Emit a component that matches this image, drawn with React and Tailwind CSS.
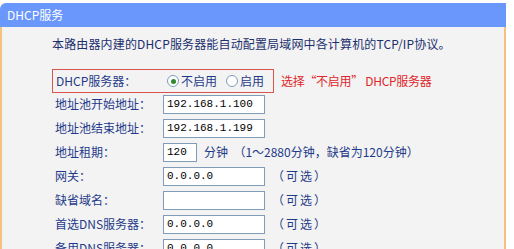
export default function App() {
  const cjk = { fontFamily: '"Noto Sans CJK SC", "Noto Sans", sans-serif' };
  const mono = { fontFamily: '"Liberation Mono", "Noto Sans CJK SC", monospace' };
  const Input = ({ value, w = "w-[102px]" }) => (
    <div className={`${w} h-[19px] border border-[#7f9db9] bg-white flex items-center px-[3px] text-[11px] text-black leading-none`} style={mono}>
      {value}
    </div>
  );
  const Row = ({ label, children }) => (
    <div className="flex items-center h-[24px]">
      <div className="w-[111px] pl-[3px] text-[12px] text-[#1f3a8a]">{label}</div>
      {children}
    </div>
  );
  const Opt = () => <span className="ml-[7px] text-[12px] text-[#1f3a8a] tracking-[2px]">（可选）</span>;
  return (
    <div className="w-[514px] h-[249px] bg-white overflow-hidden" style={cjk}>
      <div className="pt-[3px] w-[506px]">
        <div className="h-[24px] bg-[#6a97fb] rounded-tl-[6px] flex items-center pl-[7px] text-white text-[12px]">DHCP服务</div>
        <div className="h-[230px] bg-[#f3f3f3] border-l-2 border-r-2 border-[#f3c27f] pl-[50px] pt-[7px]">
          <div className="text-[12px] text-[#1b2f6e] tracking-[0.15px] h-[20px] flex items-center">本路由器内建的DHCP服务器能自动配置局域网中各计算机的TCP/IP协议。</div>
          <div className="flex items-center mt-[15px] mb-[-1px]">
            <div className="w-[222px] h-[24px] border border-[#d9534f] flex items-center">
              <div className="w-[114px] pl-[3px] text-[12px] text-[#1f3a8a]">DHCP服务器：</div>
              <label className="flex items-center text-[12px] text-[#1f3a8a]">
                <span className="w-[12px] h-[12px] rounded-full border border-[#7f9db9] bg-white flex items-center justify-center mr-[2px]">
                  <span className="w-[5px] h-[5px] rounded-full bg-[#2f8a2f]"></span>
                </span>
                不启用
              </label>
              <label className="flex items-center text-[12px] text-[#1f3a8a] ml-[9px]">
                <span className="w-[12px] h-[12px] rounded-full border border-[#7f9db9] bg-white mr-[2px]"></span>
                启用
              </label>
            </div>
            <div className="ml-[7px] text-[12px] text-[#e0262a] tracking-[-0.3px]">选择“不启用” DHCP服务器</div>
          </div>
          <div>
            <Row label="地址池开始地址："><Input value="192.168.1.100" /></Row>
            <Row label="地址池结束地址："><Input value="192.168.1.199" /></Row>
            <Row label="地址租期：">
              <Input value="120" w="w-[34px]" />
              <span className="ml-[7px] text-[12px] text-[#1f3a8a]">分钟 &nbsp;（1～2880分钟，缺省为120分钟）</span>
            </Row>
            <Row label="网关："><Input value="0.0.0.0" /><Opt /></Row>
            <Row label="缺省域名："><Input value="" /><Opt /></Row>
            <Row label="首选DNS服务器："><Input value="0.0.0.0" /><Opt /></Row>
            <Row label="备用DNS服务器："><Input value="0.0.0.0" /><Opt /></Row>
          </div>
        </div>
      </div>
    </div>
  );
}
